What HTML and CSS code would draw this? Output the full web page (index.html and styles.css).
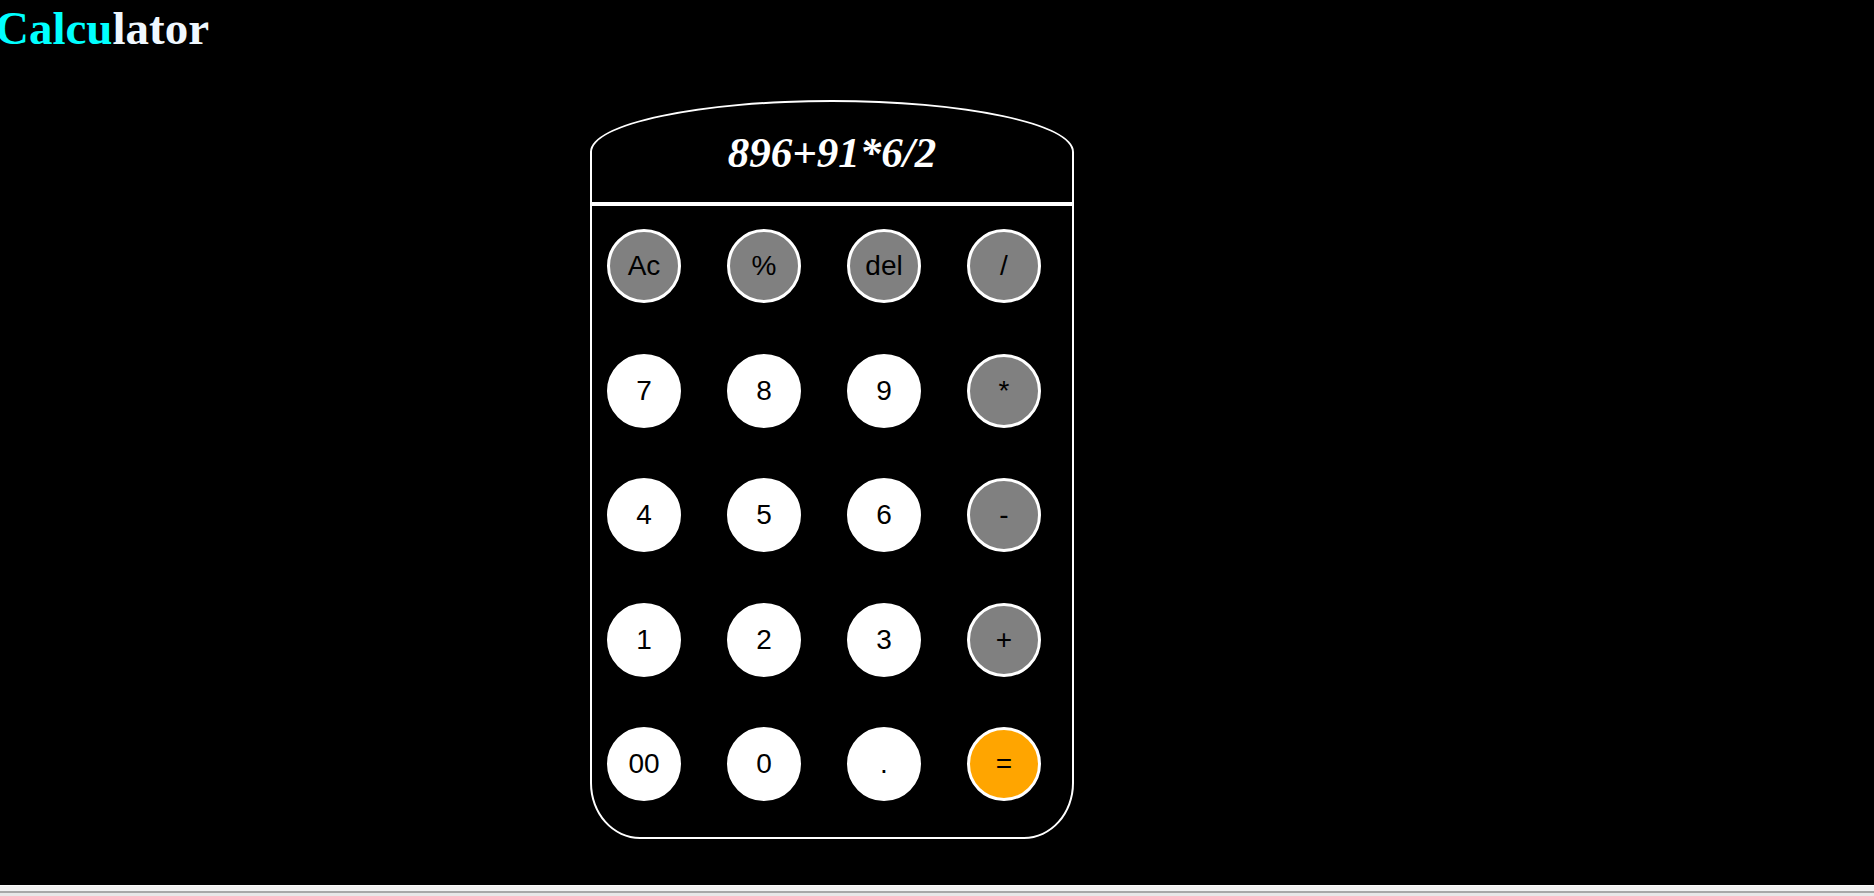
FILE: index.html
```html
<!DOCTYPE html>
<html lang="en">
<head>
<meta charset="utf-8">
<title>Calculator</title>
<link rel="stylesheet" href="styles.css">
</head>
<body>
<main class="page">
  <h1 class="title"><span class="hl">Calcu</span>lator</h1>
  <div class="calc">
    <div class="display">896+91*6/2</div>
    <div class="keys">
      <button class="key op">Ac</button>
      <button class="key op">%</button>
      <button class="key op">del</button>
      <button class="key op">/</button>
      <button class="key">7</button>
      <button class="key">8</button>
      <button class="key">9</button>
      <button class="key op">*</button>
      <button class="key">4</button>
      <button class="key">5</button>
      <button class="key">6</button>
      <button class="key op">-</button>
      <button class="key">1</button>
      <button class="key">2</button>
      <button class="key">3</button>
      <button class="key op">+</button>
      <button class="key">00</button>
      <button class="key">0</button>
      <button class="key">.</button>
      <button class="key eq">=</button>
    </div>
  </div>
</main>
<div class="hbar"></div>
</body>
</html>
```
FILE: styles.css
```css
html, body {
  margin: 0;
  padding: 0;
}
body {
  background: #000;
  height: 100vh;
  display: flex;
  flex-direction: column;
  overflow: hidden;
  font-family: "Liberation Serif", "Times New Roman", serif;
}
.page {
  flex: 1;
  min-height: 0;
}
.title {
  margin: 0 0 0 -5px;
  padding-top: 3px;
  font-size: 47px;
  line-height: 51px;
  font-weight: bold;
  color: #f0f8ff;
}
.title .hl {
  color: #00ffff;
}
.calc {
  margin: 46px 0 0 590px;
  width: 480px;
  border: 2px solid #fff;
  border-radius: 242px 242px 50px 50px / 52px 52px 56px 56px;
}
.display {
  height: 100px;
  border-bottom: 4px solid #fff;
  display: flex;
  align-items: center;
  justify-content: center;
  color: #fff;
  font-style: italic;
  font-weight: bold;
  font-size: 43px;
}
.keys {
  display: grid;
  grid-template-columns: repeat(4, 120px);
  row-gap: 50.5px;
  padding: 23px 0 36px;
}
.key {
  width: 74px;
  height: 74px;
  margin-left: 15px;
  padding: 0;
  border: 3px solid #fff;
  border-radius: 50%;
  background: #fff;
  color: #000;
  font-family: "Liberation Sans", Arial, sans-serif;
  font-size: 28px;
  line-height: 1;
}
.key.op {
  background: #808080;
}
.key.eq {
  background: #ffa500;
}
.hbar {
  height: 11px;
  flex: none;
  background: linear-gradient(to bottom, #fafafa 0 1px, #f1f1f1 1px 6px, #a8a8a8 6px 8px, #e8e8e8 8px 11px);
}
```
